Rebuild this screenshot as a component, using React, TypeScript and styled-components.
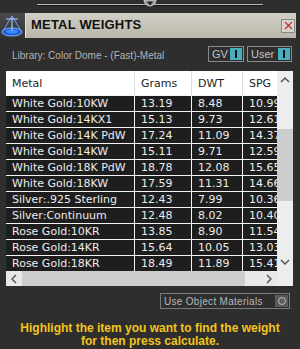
import React from "react";
import styled, { createGlobalStyle } from "styled-components";

const GlobalStyle = createGlobalStyle`
  html, body {
    margin: 0;
    padding: 0;
    background: #2e2e2e;
  }
  body {
    font-family: "Liberation Sans", Arial, sans-serif;
  }
`;

interface Metal {
  name: string;
  grams: string;
  dwt: string;
  spg: string;
}

const metals: Metal[] = [
  { name: "White Gold:10KW", grams: "13.19", dwt: "8.48", spg: "10.99" },
  { name: "White Gold:14KX1", grams: "15.13", dwt: "9.73", spg: "12.61" },
  { name: "White Gold:14K PdW", grams: "17.24", dwt: "11.09", spg: "14.37" },
  { name: "White Gold:14KW", grams: "15.11", dwt: "9.71", spg: "12.59" },
  { name: "White Gold:18K PdW", grams: "18.78", dwt: "12.08", spg: "15.65" },
  { name: "White Gold:18KW", grams: "17.59", dwt: "11.31", spg: "14.66" },
  { name: "Silver:.925 Sterling", grams: "12.43", dwt: "7.99", spg: "10.36" },
  { name: "Silver:Continuum", grams: "12.48", dwt: "8.02", spg: "10.40" },
  { name: "Rose Gold:10KR", grams: "13.85", dwt: "8.90", spg: "11.54" },
  { name: "Rose Gold:14KR", grams: "15.64", dwt: "10.05", spg: "13.03" },
  { name: "Rose Gold:18KR", grams: "18.49", dwt: "11.89", spg: "15.41" },
];

const COLS = "129px 57px 51px 34px";

const MetalWeights: React.FC = () => {
  return (
    <Panel>
      <SliderRow>
        <SliderTrack />
        <SliderKnob>
          <svg width="14" height="10" viewBox="0 0 14 10">
            <path d="M1 0 A6 6 0 0 0 13 0 Z" fill="#9a9a9a" stroke="#d0d0d0" strokeWidth="1" />
            <path d="M4 1.5 L10 1.5 L7 5.5 Z" fill="#222" />
          </svg>
        </SliderKnob>
      </SliderRow>

      <Header>
        <IconBox>
          <svg width="25" height="25" viewBox="0 0 25 25">
            <ellipse cx="12" cy="19" rx="10" ry="4" fill="#1f5fd0" stroke="#7fb0ff" strokeWidth="1" />
            <ellipse cx="12" cy="18.5" rx="6" ry="2" fill="#3d86ff" />
            <line x1="12" y1="3" x2="12" y2="18" stroke="#9ec4ff" strokeWidth="1.2" />
            <line x1="12" y1="3" x2="3" y2="18" stroke="#6aa0ff" strokeWidth="1" />
            <line x1="12" y1="3" x2="21" y2="18" stroke="#6aa0ff" strokeWidth="1" />
            <line x1="6" y1="6" x2="18" y2="6" stroke="#b8d4ff" strokeWidth="1" />
          </svg>
        </IconBox>
        <TitleBar>
          <Title>METAL WEIGHTS</Title>
          <CloseButton>
            <svg width="9" height="9" viewBox="0 0 9 9">
              <path d="M1 1 L8 8 M8 1 L1 8" stroke="#c83030" strokeWidth="1.3" />
            </svg>
          </CloseButton>
        </TitleBar>
      </Header>

      <LibraryRow>
        <LibraryText>Library: Color Dome - (Fast)-Metal</LibraryText>
        <Toggles>
          <Toggle $width={36}>
            GV
            <ToggleSwitch />
          </Toggle>
          <Toggle $width={45}>
            User
            <ToggleSwitch />
          </Toggle>
        </Toggles>
      </LibraryRow>

      <TableFrame>
        <TableMain>
          <TableCols>
            <HeadRow>
              <HeadCell>Metal</HeadCell>
              <HeadCell>Grams</HeadCell>
              <HeadCell>DWT</HeadCell>
              <HeadCell>SPG</HeadCell>
            </HeadRow>
            {metals.map((m) => (
              <BodyRow key={m.name}>
                <Cell>{m.name}</Cell>
                <Cell>{m.grams}</Cell>
                <Cell>{m.dwt}</Cell>
                <Cell>{m.spg}</Cell>
              </BodyRow>
            ))}
          </TableCols>
          <VScroll>
            <ArrowBtn>
              <svg width="10" height="6" viewBox="0 0 10 6">
                <path d="M1 5 L5 1 L9 5" fill="none" stroke="#555" strokeWidth="1.5" />
              </svg>
            </ArrowBtn>
            <VTrack>
              <VThumb />
            </VTrack>
            <ArrowBtn>
              <svg width="10" height="6" viewBox="0 0 10 6">
                <path d="M1 1 L5 5 L9 1" fill="none" stroke="#555" strokeWidth="1.5" />
              </svg>
            </ArrowBtn>
          </VScroll>
        </TableMain>
        <HScroll>
          <HArrow>
            <svg width="6" height="10" viewBox="0 0 6 10">
              <path d="M5 1 L1 5 L5 9" fill="none" stroke="#555" strokeWidth="1.5" />
            </svg>
          </HArrow>
          <HThumb />
          <HTrack />
          <HArrow>
            <svg width="6" height="10" viewBox="0 0 6 10">
              <path d="M1 1 L5 5 L1 9" fill="none" stroke="#555" strokeWidth="1.5" />
            </svg>
          </HArrow>
          <Corner />
        </HScroll>
      </TableFrame>

      <OptionsRow>
        <CheckOption>
          Use Object Materials
          <RadioBox>
            <RadioDot />
          </RadioBox>
        </CheckOption>
      </OptionsRow>

      <Message>
        Highlight the item you want to find the weight
        <br />
        for then press calculate.
      </Message>
    </Panel>
  );
};

export default function App() {
  return (
    <>
      <GlobalStyle />
      <MetalWeights />
    </>
  );
}

const Panel = styled.div`
  width: 300px;
  height: 349px;
  background: #2e2e2e;
  overflow: hidden;
  display: flex;
  flex-direction: column;
`;

const SliderRow = styled.div`
  position: relative;
  height: 13px;
  padding: 0 37px;
  display: flex;
  align-items: flex-start;
`;

const SliderTrack = styled.div`
  margin-top: 4px;
  width: 226px;
  height: 1px;
  background: #b8b8b8;
  border-bottom: 1px solid #151515;
`;

const SliderKnob = styled.div`
  position: absolute;
  left: 143px;
  top: 0;
  line-height: 0;
`;

const Header = styled.div`
  display: flex;
  height: 25px;
`;

const IconBox = styled.div`
  width: 25px;
  height: 25px;
  background: linear-gradient(#4a4a4a, #333);
  line-height: 0;
`;

const TitleBar = styled.div`
  flex: 1;
  margin-right: 4px;
  display: flex;
  align-items: center;
  justify-content: space-between;
  padding: 0 1px 0 5px;
  background: linear-gradient(#d2cfc6, #c3c0b6 60%, #b9b6ac);
  border-left: 1px solid #e6e3da;
`;

const Title = styled.div`
  font-family: "Liberation Sans", Arial, sans-serif;
  font-weight: bold;
  font-size: 13px;
  color: #111;
  letter-spacing: 0.2px;
  margin-top: -2px;
`;

const CloseButton = styled.div`
  display: flex;
  align-items: center;
  justify-content: center;
  background: #d8d5cd;
  border: 1px solid #8c8a84;
  box-sizing: border-box;
  width: 14px;
  height: 14px;
`;

const LibraryRow = styled.div`
  height: 33px;
  display: flex;
  align-items: center;
  justify-content: space-between;
  padding: 0 8px 0 12px;
`;

const LibraryText = styled.div`
  font-size: 10px;
  color: #b4b4b4;
  margin-top: 2px;
`;

const Toggles = styled.div`
  display: flex;
  gap: 3px;
  margin-top: -1px;
`;

const Toggle = styled.div<{ $width: number }>`
  width: ${(p) => p.$width}px;
  height: 16px;
  box-sizing: border-box;
  border: 1px solid #8a8a8a;
  display: flex;
  align-items: center;
  justify-content: space-between;
  padding: 0 1px 0 3px;
  font-size: 11px;
  color: #c4c4c4;
`;

const ToggleSwitch = styled.div`
  width: 12px;
  height: 12px;
  background: #45aebc;
  display: flex;
  align-items: center;
  justify-content: center;
  &::after {
    content: "";
    width: 2px;
    height: 8px;
    background: #111;
  }
`;

const TableFrame = styled.div`
  margin-left: 6px;
  width: 287px;
  display: flex;
  flex-direction: column;
`;

const TableMain = styled.div`
  display: flex;
`;

const TableCols = styled.div`
  width: 271px;
  overflow: hidden;
  background: #fff;
  font-family: "DejaVu Sans", Verdana, sans-serif;
  font-size: 11px;
`;

const HeadRow = styled.div`
  display: grid;
  grid-template-columns: ${COLS};
  height: 24px;
  background: #fff;
`;

const HeadCell = styled.div`
  display: flex;
  align-items: center;
  padding-left: 6px;
  color: #1c1c1c;
  border-right: 1px solid #dcdcdc;
  white-space: nowrap;
  overflow: hidden;
  &:last-child {
    border-right: none;
  }
`;

const BodyRow = styled.div`
  display: grid;
  grid-template-columns: ${COLS};
  height: 16px;
  box-sizing: border-box;
  border-top: 1px solid #f4f4f4;
`;

const Cell = styled.div`
  background: #1e1e1e;
  color: #ececec;
  padding-left: 6px;
  line-height: 15px;
  white-space: nowrap;
  overflow: hidden;
  border-right: 1px solid #f4f4f4;
  &:last-child {
    border-right: none;
  }
`;

const VScroll = styled.div`
  width: 16px;
  background: #ededed;
  display: flex;
  flex-direction: column;
`;

const ArrowBtn = styled.div`
  height: 18px;
  display: flex;
  align-items: center;
  justify-content: center;
  line-height: 0;
`;

const VTrack = styled.div`
  flex: 1;
  padding-top: 40px;
  box-sizing: border-box;
`;

const VThumb = styled.div`
  height: 72px;
  background: #cdcdcd;
`;

const HScroll = styled.div`
  display: flex;
  height: 15px;
  background: #e8e8e8;
`;

const HArrow = styled.div`
  width: 16px;
  display: flex;
  align-items: center;
  justify-content: center;
  line-height: 0;
`;

const HThumb = styled.div`
  width: 223px;
  background: #cdcdcd;
`;

const HTrack = styled.div`
  flex: 1;
`;

const Corner = styled.div`
  width: 16px;
  background: #ededed;
`;

const OptionsRow = styled.div`
  display: flex;
  justify-content: flex-end;
  padding: 7px 10px 0 0;
`;

const CheckOption = styled.div`
  width: 130px;
  height: 16px;
  box-sizing: border-box;
  border: 1px solid #7a7a7a;
  display: flex;
  align-items: center;
  justify-content: space-between;
  padding: 0 1px 0 3px;
  font-size: 10px;
  letter-spacing: 0.3px;
  color: #b8b8b8;
`;

const RadioBox = styled.div`
  width: 13px;
  height: 12px;
  background: #5a5a5a;
  display: flex;
  align-items: center;
  justify-content: center;
`;

const RadioDot = styled.div`
  width: 6px;
  height: 6px;
  border-radius: 50%;
  border: 1px solid #bbb;
`;

const Message = styled.div`
  margin-top: 13px;
  text-align: center;
  font-family: "Liberation Sans", Arial, sans-serif;
  font-weight: bold;
  font-size: 12px;
  line-height: 13px;
  color: #f3c41c;
`;
